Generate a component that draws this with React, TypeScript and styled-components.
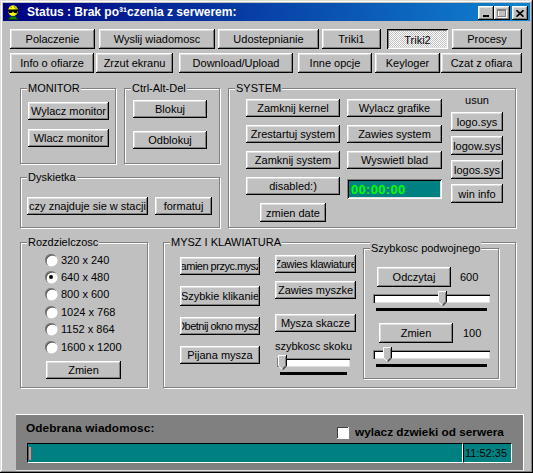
import React from "react";
import styled, { createGlobalStyle, css } from "styled-components";

const GlobalStyle = createGlobalStyle`
  * { box-sizing: border-box; }
  html, body { margin: 0; padding: 0; background: #c0c0c0; }
  body {
    font-family: "Liberation Sans", Arial, sans-serif;
    font-size: 11px;
    color: #000;
  }
`;

const raised = css`
  background: #c0c0c0;
  box-shadow: inset -1px -1px #000, inset 1px 1px #fff, inset -2px -2px #808080,
    inset 2px 2px #dfdfdf;
`;

const sunken = css`
  box-shadow: inset 1px 1px #808080, inset -1px -1px #fff, inset 2px 2px #000,
    inset -2px -2px #dfdfdf;
`;

const Window = styled.div`
  width: 533px;
  height: 473px;
  padding: 3px;
  background: #c0c0c0;
  box-shadow: inset -1px -1px #000, inset 1px 1px #dfdfdf, inset -2px -2px #808080,
    inset 2px 2px #fff;
  display: flex;
  flex-direction: column;
  overflow: hidden;
`;

const TitleBar = styled.div`
  height: 18px;
  flex-shrink: 0;
  display: flex;
  align-items: center;
  padding: 0 2px 0 4px;
  background: linear-gradient(90deg, #000080, #1084d0);
`;

const TitleText = styled.span`
  flex: 1;
  margin-left: 8px;
  color: #fff;
  font-weight: bold;
  font-size: 12px;
  white-space: nowrap;
`;

const CaptionButton = styled.div<{ $gap?: number }>`
  width: 16px;
  height: 14px;
  margin: 2px 0 0 ${(p) => p.$gap ?? 0}px;
  display: flex;
  align-items: center;
  justify-content: center;
  ${raised}
`;

const Client = styled.div`
  display: flex;
  flex-direction: column;
`;

const TabRow = styled.div<{ $mt: number }>`
  display: flex;
  height: 20px;
  margin-top: ${(p) => p.$mt}px;
`;

const Tab = styled.div<{ $w: number; $ml: number; $active?: boolean }>`
  width: ${(p) => p.$w}px;
  margin-left: ${(p) => p.$ml}px;
  display: flex;
  align-items: center;
  justify-content: center;
  white-space: nowrap;
  ${(p) =>
    p.$active
      ? css`
          padding-top: 1px;
          background: repeating-conic-gradient(#fff 0 25%, #c0c0c0 0 50%) 0 0 / 2px 2px;
          box-shadow: inset 1px 1px #000, inset -1px -1px #fff, inset 2px 2px #808080,
            inset -2px -2px #dfdfdf;
        `
      : raised}
`;

const Main = styled.div`
  display: flex;
  flex-direction: column;
  margin-top: 15px;
  padding-left: 17px;
`;

const Row = styled.div<{ $mt?: number; $gap?: number }>`
  display: flex;
  align-items: flex-start;
  margin-top: ${(p) => p.$mt ?? 0}px;
  gap: ${(p) => p.$gap ?? 0}px;
`;

const Column = styled.div<{
  $w?: number;
  $gap?: number;
  $mt?: number;
  $ml?: number;
  $center?: boolean;
}>`
  display: flex;
  flex-direction: column;
  align-items: ${(p) => (p.$center ? "center" : "flex-start")};
  width: ${(p) => (p.$w ? `${p.$w}px` : "auto")};
  gap: ${(p) => p.$gap ?? 0}px;
  margin-top: ${(p) => p.$mt ?? 0}px;
  margin-left: ${(p) => p.$ml ?? 0}px;
  flex-shrink: 0;
`;

const Group = styled.div<{
  $w: number;
  $h: number;
  $pad?: string;
  $dir?: "row" | "column";
  $mt?: number;
  $ml?: number;
}>`
  position: relative;
  flex-shrink: 0;
  width: ${(p) => p.$w}px;
  height: ${(p) => p.$h}px;
  margin-top: ${(p) => p.$mt ?? 0}px;
  margin-left: ${(p) => p.$ml ?? 0}px;
  padding: ${(p) => p.$pad ?? "0"};
  display: flex;
  flex-direction: ${(p) => p.$dir ?? "column"};
  align-items: flex-start;
  border: 1px solid #808080;
  box-shadow: inset 1px 1px #fff, 1px 1px #fff;
`;

const Legend = styled.span`
  position: absolute;
  top: -7px;
  left: 6px;
  padding: 0 1px;
  line-height: 13px;
  background: #c0c0c0;
  white-space: nowrap;
`;

const Btn = styled.button<{ $w: number; $h?: number; $mt?: number; $ml?: number; $ls?: number }>`
  width: ${(p) => p.$w}px;
  height: ${(p) => p.$h ?? 18}px;
  margin: ${(p) => p.$mt ?? 0}px 0 0 ${(p) => p.$ml ?? 0}px;
  padding: 0;
  border: 0;
  font: inherit;
  letter-spacing: ${(p) => p.$ls ?? 0}px;
  color: #000;
  display: flex;
  flex-shrink: 0;
  ${raised}
`;

const BtnLabel = styled.span`
  flex: 1;
  min-width: 0;
  margin: 2px;
  overflow: hidden;
  display: flex;
  align-items: center;
  justify-content: center;
  white-space: nowrap;
`;

const Timer = styled.div`
  width: 95px;
  height: 20px;
  margin-top: 2px;
  padding-left: 4px;
  display: flex;
  align-items: center;
  background: #008080;
  color: #00ff00;
  font-weight: bold;
  font-size: 13px;
  letter-spacing: 0.3px;
  ${sunken}
`;

const Caption = styled.span<{ $mt?: number; $ml?: number }>`
  line-height: 13px;
  margin-top: ${(p) => p.$mt ?? 0}px;
  margin-left: ${(p) => p.$ml ?? 0}px;
  white-space: nowrap;
`;

const RadioList = styled.div`
  display: flex;
  flex-direction: column;
  padding-left: 24px;
`;

const RadioRow = styled.div`
  display: flex;
  align-items: center;
  gap: 4px;
  height: 17.4px;
`;

const RadioCircle = styled.span<{ $checked?: boolean }>`
  position: relative;
  width: 12px;
  height: 12px;
  border-radius: 50%;
  background: #fff;
  box-shadow: inset 1px 1px #808080, inset 1.5px 1.5px #404040, 0.5px 0.5px #fff;
  ${(p) =>
    p.$checked &&
    css`
      &::after {
        content: "";
        position: absolute;
        left: 4px;
        top: 4px;
        width: 4px;
        height: 4px;
        border-radius: 50%;
        background: #000;
      }
    `}
`;

const ValueRow = styled.div<{ $mt: number; $ml: number }>`
  display: flex;
  align-items: center;
  margin-top: ${(p) => p.$mt}px;
  margin-left: ${(p) => p.$ml}px;
`;

const ValueText = styled.span<{ $ml: number }>`
  margin-left: ${(p) => p.$ml}px;
`;

const SliderWrap = styled.div<{ $w: number; $ml: number; $mt: number }>`
  width: ${(p) => p.$w}px;
  margin: ${(p) => p.$mt}px 0 0 ${(p) => p.$ml}px;
  flex-shrink: 0;
`;

const Track = styled.div`
  position: relative;
  height: 9px;
  background: #fff;
  box-shadow: inset 1px 1px #808080, inset 2px 2px #000, inset -1px -1px #dfdfdf;
`;

const Thumb = styled.svg`
  position: absolute;
  top: -3px;
`;

const Ticks = styled.div`
  height: 3px;
  margin: 5px 3px 0 3px;
  background: #000;
`;

const MessagePanel = styled.div`
  width: 509px;
  height: 57px;
  margin: 26px 0 0 12px;
  padding: 6px 0 0 10px;
  background: #808080;
  border-top: 1px solid #fff;
  border-right: 1px solid #fff;
  border-bottom: 1px solid #dfdfdf;
  border-left: 1px solid #c0c0c0;
  display: flex;
  flex-direction: column;
`;

const PanelHeader = styled.div`
  display: grid;
  grid-template-columns: 310px auto;
  align-items: start;
  height: 22px;
`;

const PanelTitle = styled.span`
  font-weight: bold;
  font-size: 11.8px;
  line-height: 14px;
  letter-spacing: 0.1px;
`;

const CheckOption = styled.label`
  display: flex;
  align-items: center;
  gap: 7px;
  margin-top: 5px;
  font-weight: bold;
  font-size: 11.8px;
  line-height: 12px;
  white-space: nowrap;
`;

const CheckBox = styled.span`
  width: 12px;
  height: 12px;
  background: #fff;
  box-shadow: inset 1px 1px #808080, inset 2px 2px #404040, 1px 1px #fff;
`;

const MessageBar = styled.div`
  display: flex;
  height: 20px;
  margin-left: 1px;
`;

const Field = styled.div<{ $w: number }>`
  width: ${(p) => p.$w}px;
  height: 100%;
  display: flex;
  align-items: center;
  padding-left: 1px;
  background: #008080;
  border-top: 1px solid #000;
  border-left: 1px solid #000;
  border-bottom: 1px solid #fff;
  border-right: 1px solid #fff;
`;

const Caret = styled.span`
  width: 2px;
  height: 13px;
  background: #ff8080;
`;

const tabRows = [
  [
    { label: "Polaczenie", w: 85, ml: 7 },
    { label: "Wyslij wiadomosc", w: 116, ml: 4 },
    { label: "Udostepnianie", w: 101, ml: 3 },
    { label: "Triki1", w: 59, ml: 3 },
    { label: "Triki2", w: 61, ml: 6, active: true },
    { label: "Procesy", w: 70, ml: 4 },
  ],
  [
    { label: "Info o ofiarze", w: 84, ml: 7 },
    { label: "Zrzut ekranu", w: 77, ml: 2 },
    { label: "Download/Upload", w: 114, ml: 6 },
    { label: "Inne opcje", w: 74, ml: 5 },
    { label: "Keyloger", w: 65, ml: 3 },
    { label: "Czat z ofiara", w: 81, ml: 1 },
  ],
];

const resolutions = ["320 x 240", "640 x 480", "800 x 600", "1024 x 768", "1152 x 864", "1600 x 1200"];

const Button = ({
  children,
  w,
  h,
  mt,
  ml,
  ls,
}: {
  children: React.ReactNode;
  w: number;
  h?: number;
  mt?: number;
  ml?: number;
  ls?: number;
}) => (
  <Btn $w={w} $h={h} $mt={mt} $ml={ml} $ls={ls}>
    <BtnLabel>{children}</BtnLabel>
  </Btn>
);

const Slider = ({ w, ml, mt, value }: { w: number; ml: number; mt: number; value: number }) => (
  <SliderWrap $w={w} $ml={ml} $mt={mt}>
    <Track>
      <Thumb width="9" height="15" viewBox="0 0 9 15" style={{ left: Math.round(value * (w - 9)) }}>
        <path d="M0 0H9V11L4.5 15L0 11Z" fill="#c0c0c0" />
        <path d="M0.5 11V0.5H8" stroke="#fff" fill="none" />
        <path d="M0.5 11L4.5 14.5" stroke="#fff" fill="none" />
        <path d="M8.5 0V11L4.5 14.8" stroke="#000" fill="none" />
        <path d="M7.5 1.5V10.6L4.5 13.3" stroke="#808080" fill="none" />
      </Thumb>
    </Track>
    <Ticks />
  </SliderWrap>
);

const AppIcon = () => (
  <svg width="12" height="15" viewBox="0 0 12 15">
    <path d="M2 13h8l2 2H0z" fill="#004000" />
    <path d="M3.5 11.5h5L10 14H2z" fill="#008000" />
    <ellipse cx="6" cy="5.6" rx="4.8" ry="5.4" fill="#ffff00" />
    <path d="M6 0.2a4.8 5.4 0 0 1 4.8 5.4a4.8 5.4 0 0 1-2.4 4.7C9.5 7 8.5 3 6 0.2z" fill="#c0c000" />
    <path d="M1 4.6h10v1.2l-1.2 2.2H7.2L6 6.4 4.8 8H2.2L1 5.8z" fill="#000" />
    <circle cx="4" cy="2.4" r="0.7" fill="#808000" />
    <circle cx="7.6" cy="2" r="0.6" fill="#808000" />
  </svg>
);

export default function App() {
  return (
    <>
      <GlobalStyle />
      <Window>
        <TitleBar>
          <AppIcon />
          <TitleText>Status : Brak po³¹czenia z serwerem:</TitleText>
          <CaptionButton>
            <svg width="8" height="8" viewBox="0 0 8 8">
              <rect x="1" y="6" width="6" height="2" fill="#000" />
            </svg>
          </CaptionButton>
          <CaptionButton>
            <svg width="10" height="9" viewBox="0 0 10 9">
              <rect x="1.5" y="1.5" width="8" height="7" stroke="#fff" fill="none" />
              <rect x="0.5" y="0.5" width="8" height="7" stroke="#808080" fill="none" />
              <rect x="0" y="0" width="9" height="2" fill="#808080" />
            </svg>
          </CaptionButton>
          <CaptionButton $gap={2}>
            <svg width="8" height="7" viewBox="0 0 8 7">
              <path d="M0.5 0.3L7.5 6.7M7.5 0.3L0.5 6.7" stroke="#000" strokeWidth="1.7" />
            </svg>
          </CaptionButton>
        </TitleBar>

        <Client>
          {tabRows.map((row, i) => (
            <TabRow key={i} $mt={i === 0 ? 8 : 4}>
              {row.map((t) => (
                <Tab key={t.label} $w={t.w} $ml={t.ml} $active={"active" in t && t.active}>
                  {t.label}
                </Tab>
              ))}
            </TabRow>
          ))}

          <Main>
            <Row>
              <Column>
                <Row $gap={8}>
                  <Group $w={96} $h={76} $pad="13px 0 0 7px">
                    <Legend>MONITOR</Legend>
                    <Column $gap={9}>
                      <Button w={81}>Wylacz monitor</Button>
                      <Button w={81}>Wlacz monitor</Button>
                    </Column>
                  </Group>
                  <Group $w={96} $h={76} $pad="11px 0 0 8px">
                    <Legend>Ctrl-Alt-Del</Legend>
                    <Column $gap={13}>
                      <Button w={74}>Blokuj</Button>
                      <Button w={74}>Odblokuj</Button>
                    </Column>
                  </Group>
                </Row>
                <Group $w={200} $h={51} $mt={13} $dir="row" $pad="19px 0 0 6px">
                  <Legend>Dyskietka</Legend>
                  <Button w={121}>czy znajduje sie w stacji</Button>
                  <Button w={57} ml={7}>
                    formatuj
                  </Button>
                </Group>
              </Column>

              <Group $w={288} $h={140} $ml={8} $dir="row" $pad="10px 0 0 17px">
                <Legend>SYSTEM</Legend>
                <Column $w={94} $gap={8} $center>
                  <Button w={94}>Zamknij kernel</Button>
                  <Button w={94}>Zrestartuj system</Button>
                  <Button w={94}>Zamknij system</Button>
                  <Button w={94}>disabled:)</Button>
                  <Button w={66} h={19}>
                    zmien date
                  </Button>
                </Column>
                <Column $w={95} $gap={8} $ml={7}>
                  <Button w={95}>Wylacz grafike</Button>
                  <Button w={95}>Zawies system</Button>
                  <Button w={95}>Wyswietl blad</Button>
                  <Timer>00:00:00</Timer>
                </Column>
                <Column $w={52} $gap={5} $ml={9} $center>
                  <Caption $mt={-5}>usun</Caption>
                  <Button w={52} h={19}>
                    logo.sys
                  </Button>
                  <Button w={52} h={19}>
                    logow.sys
                  </Button>
                  <Button w={52} h={19}>
                    logos.sys
                  </Button>
                  <Button w={52} h={19}>
                    win info
                  </Button>
                </Column>
              </Group>
            </Row>

            <Row $mt={14}>
              <Group $w={128} $h={146} $pad="8px 0 0 0">
                <Legend>Rozdzielczosc</Legend>
                <RadioList>
                  {resolutions.map((r) => (
                    <RadioRow key={r}>
                      <RadioCircle $checked={r === "640 x 480"} />
                      <span>{r}</span>
                    </RadioRow>
                  ))}
                </RadioList>
                <Button w={75} mt={6} ml={25}>
                  Zmien
                </Button>
              </Group>

              <Group $w={353} $h={146} $ml={15} $dir="row">
                <Legend>MYSZ I KLAWIATURA</Legend>
                <Column $w={80} $gap={11} $mt={14} $ml={16}>
                  <Button w={80} ls={-0.5}>
                    Zamien przyc.myszy
                  </Button>
                  <Button w={80} h={20}>
                    Szybkie klikanie
                  </Button>
                  <Button w={80} ls={-0.5}>
                    Obetnij okno myszy
                  </Button>
                  <Button w={80}>Pijana mysza</Button>
                </Column>
                <Column $w={81} $mt={12} $ml={15}>
                  <Button w={81} ls={-0.3}>
                    Zawies klawiature
                  </Button>
                  <Button w={81} mt={8}>
                    Zawies myszke
                  </Button>
                  <Button w={81} mt={15}>
                    Mysza skacze
                  </Button>
                  <Caption $mt={8}>szybkosc skoku</Caption>
                  <Slider w={73} ml={2} mt={5} value={0.01} />
                </Column>
                <Group $w={136} $h={131} $mt={5} $ml={7} $pad="18px 0 0 0">
                  <Legend>Szybkosc podwojnego</Legend>
                  <ValueRow $mt={0} $ml={13}>
                    <Button w={74} h={20}>
                      Odczytaj
                    </Button>
                    <ValueText $ml={9}>600</ValueText>
                  </ValueRow>
                  <Slider w={117} ml={9} mt={7} value={0.6} />
                  <ValueRow $mt={12} $ml={15}>
                    <Button w={74} h={20}>
                      Zmien
                    </Button>
                    <ValueText $ml={10}>100</ValueText>
                  </ValueRow>
                  <Slider w={117} ml={9} mt={7} value={0.093} />
                </Group>
              </Group>
            </Row>
          </Main>

          <MessagePanel>
            <PanelHeader>
              <PanelTitle>Odebrana wiadomosc:</PanelTitle>
              <CheckOption>
                <CheckBox />
                wylacz dzwieki od serwera
              </CheckOption>
            </PanelHeader>
            <MessageBar>
              <Field $w={436}>
                <Caret />
              </Field>
              <Field $w={49}>11:52:35</Field>
            </MessageBar>
          </MessagePanel>
        </Client>
      </Window>
    </>
  );
}
